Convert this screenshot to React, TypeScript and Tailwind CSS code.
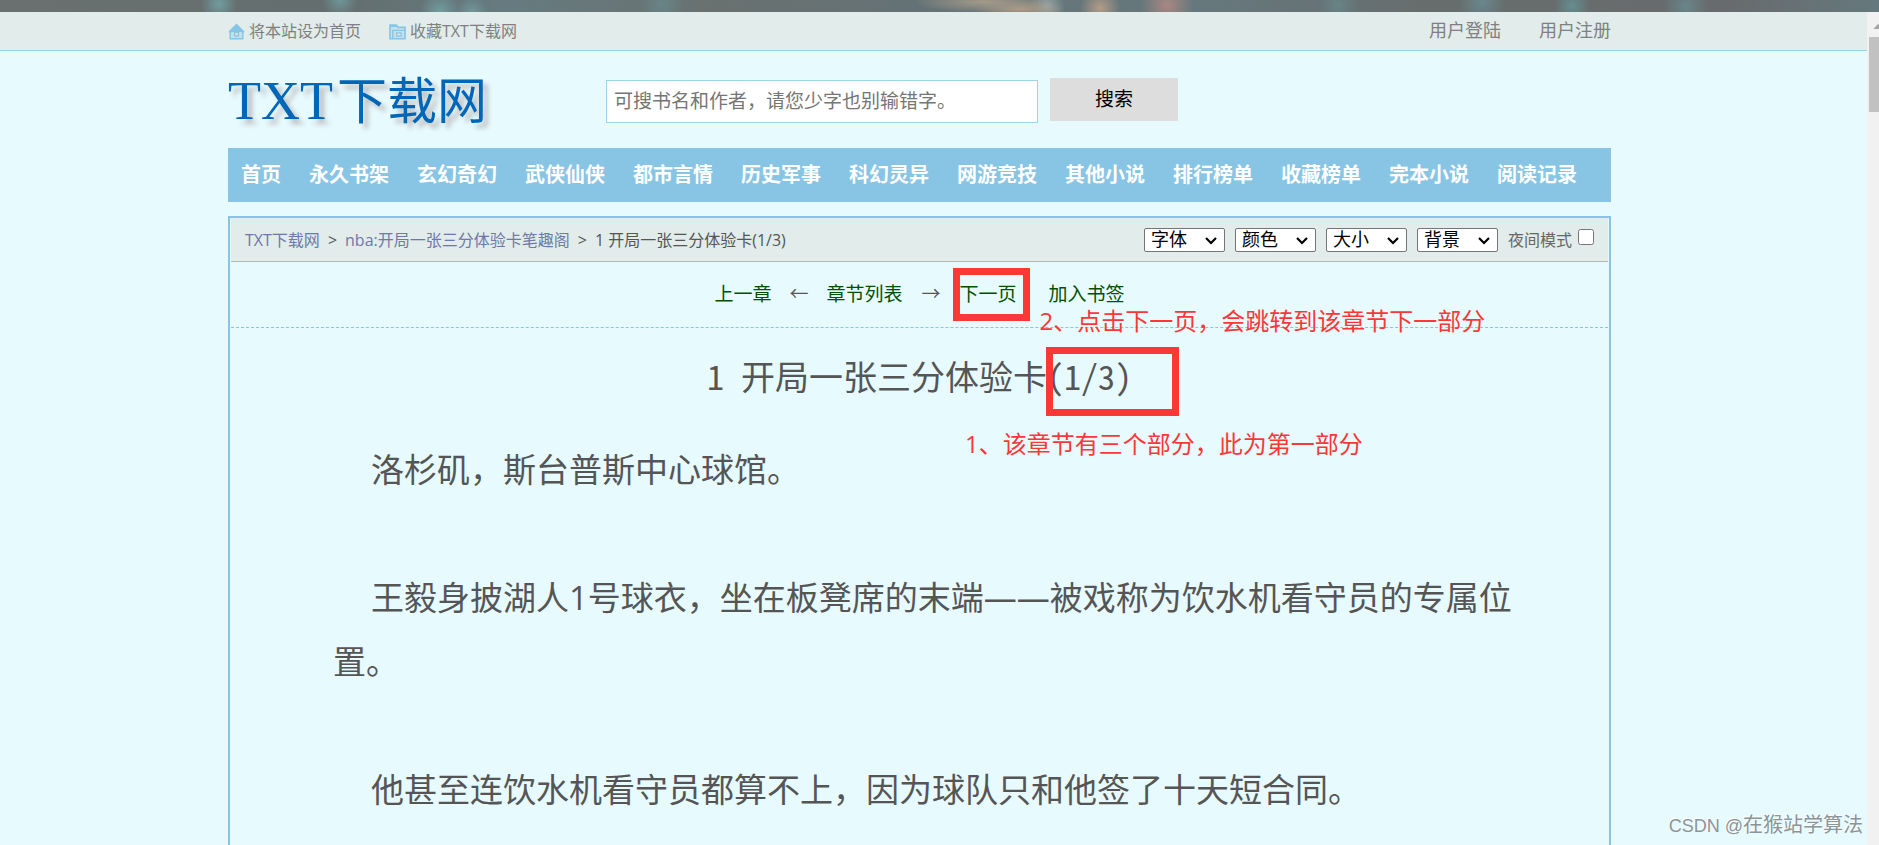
const NAV = [
  '首页',
  '永久书架',
  '玄幻奇幻',
  '武侠仙侠',
  '都市言情',
  '历史军事',
  '科幻灵异',
  '网游竞技',
  '其他小说',
  '排行榜单',
  '收藏榜单',
  '完本小说',
  '阅读记录',
];

const READER_OPTIONS = ['字体', '颜色', '大小', '背景'];

const PARAGRAPHS = [
  '洛杉矶，斯台普斯中心球馆。',
  '王毅身披湖人1号球衣，坐在板凳席的末端——被戏称为饮水机看守员的专属位置。',
  '他甚至连饮水机看守员都算不上，因为球队只和他签了十天短合同。',
];

function HomeIcon() {
  return (
    <svg width="17" height="17" viewBox="0 0 17 17" aria-hidden="true">
      <path d="M8.5 0.5 L16.5 8.5 L15 10.5 L8.5 4.6 L2 10.5 L0.5 8.5 Z" fill="#86c5e4" />
      <path d="M2.2 9.5 V15.8 H14.8 V9.5 L8.5 4 Z" fill="#c4e2ee" stroke="#86c5e4" strokeWidth="1.4" />
      <path d="M8.5 3.6 L14 9 H3 Z" fill="#86c5e4" />
      <rect x="6.6" y="9.4" width="3.8" height="3.6" fill="#e1eceb" stroke="#86c5e4" strokeWidth="1.4" />
    </svg>
  );
}

function FolderIcon() {
  return (
    <svg width="17" height="17" viewBox="0 0 17 17" aria-hidden="true">
      <path d="M1 15.8 V2 H7.5 L9 4.4 H16 V15.8 Z" fill="#c4e2ee" stroke="#86c5e4" strokeWidth="1.6" />
      <path d="M1 2 H7.5 V4 H1 Z" fill="#86c5e4" />
      <path d="M3.8 15.5 V7.4 H15.5" fill="none" stroke="#86c5e4" strokeWidth="1.4" />
      <rect x="7.6" y="10" width="4.6" height="3" fill="#e1eceb" stroke="#86c5e4" strokeWidth="1.3" />
    </svg>
  );
}

function TopBar() {
  return (
    <div className="flex justify-center border-b border-[#9fd3e8] bg-[#e1eceb] pr-7 text-[#808080]">
      <div className="flex h-[38px] w-full max-w-[1383px] items-center justify-between">
        <div className="flex items-center gap-7 text-base">
          <a href="#home" className="flex items-center gap-1">
            <HomeIcon />
            将本站设为首页
          </a>
          <a href="#favourite" className="flex items-center gap-1">
            <FolderIcon />
            收藏TXT下载网
          </a>
        </div>
        <div className="flex gap-[38px] pb-0.5 text-lg">
          <a href="#login">用户登陆</a>
          <a href="#register">用户注册</a>
        </div>
      </div>
    </div>
  );
}

function SiteHeader() {
  return (
    <header className="flex h-[97px] items-center">
      <a
        href="#top"
        className="w-[378px] whitespace-nowrap pt-1 font-['Liberation_Serif','Noto_Sans_CJK_SC',serif] text-[54px] leading-[60px] text-[#0066b8] [text-shadow:5px_5px_5px_#bbb]"
      >
        TXT<span className="ml-1 text-[50px]">下载网</span>
      </a>
      <form className="flex items-center gap-3 text-[19px]" onSubmit={(e) => e.preventDefault()}>
        <input
          type="search"
          aria-label="搜索"
          placeholder="可搜书名和作者，请您少字也别输错字。"
          className="mt-1 h-[43px] w-[432px] border border-[#9fd3e8] bg-white px-[7px] pb-0.5 placeholder:text-[#757575]"
        />
        <button type="submit" className="h-[43px] w-32 bg-[#ddd] text-black">
          搜索
        </button>
      </form>
    </header>
  );
}

function ReaderSelect({ name }: { name: string }) {
  return (
    <span className="relative flex">
      <select
        aria-label={name}
        className="h-6 w-[81px] appearance-none rounded-[2px] border border-[#767676] bg-white px-1.5 pb-0.5 text-lg leading-5 text-black"
      >
        <option>{name}</option>
      </select>
      <svg
        width="14"
        height="9"
        viewBox="0 0 14 9"
        className="pointer-events-none absolute right-[7px] top-2"
        aria-hidden="true"
      >
        <path d="M2 2 L7 7 L12 2" fill="none" stroke="#000" strokeWidth="2.2" />
      </svg>
    </span>
  );
}

function ReaderToolbar() {
  return (
    <div className="flex h-11 items-center justify-between border-b border-[#88c5e4] bg-[#e1eceb] px-3.5 text-base text-[#555]">
      <nav aria-label="位置" className="flex gap-2">
        <a href="#top" className="text-[#6f78a7]">TXT下载网</a>
        <span>&gt;</span>
        <a href="#book" className="text-[#6f78a7]">nba:开局一张三分体验卡笔趣阁</a>
        <span>&gt;</span>
        <span>1 开局一张三分体验卡(1/3)</span>
      </nav>
      <div className="flex items-center gap-2.5">
        {READER_OPTIONS.map((name) => (
          <ReaderSelect key={name} name={name} />
        ))}
        <label className="flex items-center gap-1.5 text-[#666]">
          夜间模式
          <input type="checkbox" className="mb-1.5 size-4" />
        </label>
      </div>
    </div>
  );
}

function ChapterNav() {
  return (
    <nav
      aria-label="章节"
      className="flex h-[66px] items-center justify-center border-b border-dashed border-[#88c5e4] text-[19px] text-[#555]"
    >
      <a href="#prev" className="text-[#005000]">上一章</a>
      <span className="mx-[18px]">←</span>
      <a href="#list" className="text-[#005000]">章节列表</a>
      <span className="mx-[19px]">→</span>
      <span className="relative">
        <a href="#next" className="text-[#005000]">下一页</a>
        <span className="absolute -left-[7px] -top-3 h-[53px] w-[77px] border-[7px] border-[#fb3737]" />
        <span className="absolute left-20 top-[23px] z-10 whitespace-nowrap text-2xl leading-9 text-[#fb3737]">
          2、点击下一页，会跳转到该章节下一部分
        </span>
      </span>
      <a href="#bookmark" className="ml-8 text-[#005000]">加入书签</a>
    </nav>
  );
}

function Chapter() {
  return (
    <article className="text-[#555]">
      <h1 className="mt-4 mb-[30px] whitespace-pre text-center font-['Noto_Sans_Mono_CJK_SC','Noto_Sans_CJK_SC',sans-serif] text-[34px] leading-[64px]">
        1 开局一张三分体验卡
        <span className="relative">
          (1/3)
          <span className="absolute -left-px -top-1 h-[69px] w-[133px] border-[7px] border-[#fb3737]" />
          <span className="absolute -left-[82px] top-[75px] font-['Open_Sans','Noto_Sans_CJK_SC',sans-serif] text-2xl leading-9 text-[#fb3737]">
            1、该章节有三个部分，此为第一部分
          </span>
        </span>
      </h1>
      <div className="flex flex-col gap-16 pr-[90px] pl-[102px] text-[33px] leading-[64px]">
        {PARAGRAPHS.map((text) => (
          <p key={text} className="indent-[38px]">
            {text}
          </p>
        ))}
      </div>
    </article>
  );
}

function Scrollbar() {
  return (
    <div className="w-3 shrink-0 overflow-hidden bg-[#f1f1f1] pt-3 pl-0.5">
      <svg width="16" height="5" viewBox="0 0 16 5" className="block max-w-none" aria-hidden="true">
        <path d="M4.500 5 L9 0 L13.500 5 Z" fill="#a3a3a3" />
      </svg>
      <div className="mt-2 h-[75px] bg-[#c1c1c1]" />
    </div>
  );
}

export default function App() {
  return (
    <div className="relative flex h-screen flex-col overflow-hidden bg-[#e7fafe] font-['Open_Sans','Noto_Sans_CJK_SC',sans-serif]">
      <div className="h-3 shrink-0 bg-[radial-gradient(circle_at_219px_4px,#709da1_0,transparent_18px),radial-gradient(circle_at_340px_0px,#6f959a_0,transparent_18px),radial-gradient(circle_at_440px_12px,#709da1_0,transparent_20px),radial-gradient(circle_at_472px_12px,#70969a_0,transparent_16px),radial-gradient(circle_at_662px_4px,#688589_0,transparent_22px),radial-gradient(ellipse_70px_11px_at_985px_2px,#a59b8a_0,transparent_100%),radial-gradient(ellipse_45px_9px_at_1020px_9px,#b19c84_0,transparent_100%),radial-gradient(circle_at_1047px_6px,#94a4a6_0,transparent_18px),radial-gradient(circle_at_1100px_8px,#b39c87_0,transparent_20px),radial-gradient(circle_at_1167px_5px,#a98782_0,transparent_26px),radial-gradient(circle_at_1338px_5px,#688488_0,transparent_20px),radial-gradient(circle_at_1482px_2px,#69878d_0,transparent_24px),radial-gradient(circle_at_1572px_6px,#658e91_0,transparent_18px),radial-gradient(circle_at_1686px_6px,#69868a_0,transparent_22px),linear-gradient(90deg,#6a7070_0%,#646e6e_18%,#667b80_27%,#697170_38%,#657275_48%,#66787d_64%,#676d6d_76%,#686b6d_92%,#65787d_100%)]" />
      <div className="flex min-h-0 flex-1">
        <div className="flex min-w-0 flex-1 flex-col">
          <TopBar />
          <div className="flex min-h-0 flex-1 justify-center pr-7">
            <div className="flex w-full max-w-[1383px] flex-col">
              <SiteHeader />
              <nav aria-label="分类" className="flex h-[54px] shrink-0 items-center gap-7 bg-[#88c5e4] px-[13px] text-xl font-bold text-white">
                {NAV.map((item) => (
                  <a key={item} href="#category" className="whitespace-nowrap">
                    {item}
                  </a>
                ))}
              </nav>
              <main className="mt-3.5 min-h-0 flex-1 border-2 border-b-0 border-[#88c5e4] px-px">
                <ReaderToolbar />
                <ChapterNav />
                <Chapter />
              </main>
            </div>
          </div>
        </div>
        <Scrollbar />
      </div>
      <div className="absolute right-4 bottom-1 font-['Liberation_Sans','Noto_Sans_CJK_SC',sans-serif] text-lg leading-[30px] text-[#8b9496] [text-shadow:-1px_-1px_0_#fff]">
        CSDN @<span className="text-xl leading-[30px]">在猴站学算法</span>
      </div>
    </div>
  );
}
